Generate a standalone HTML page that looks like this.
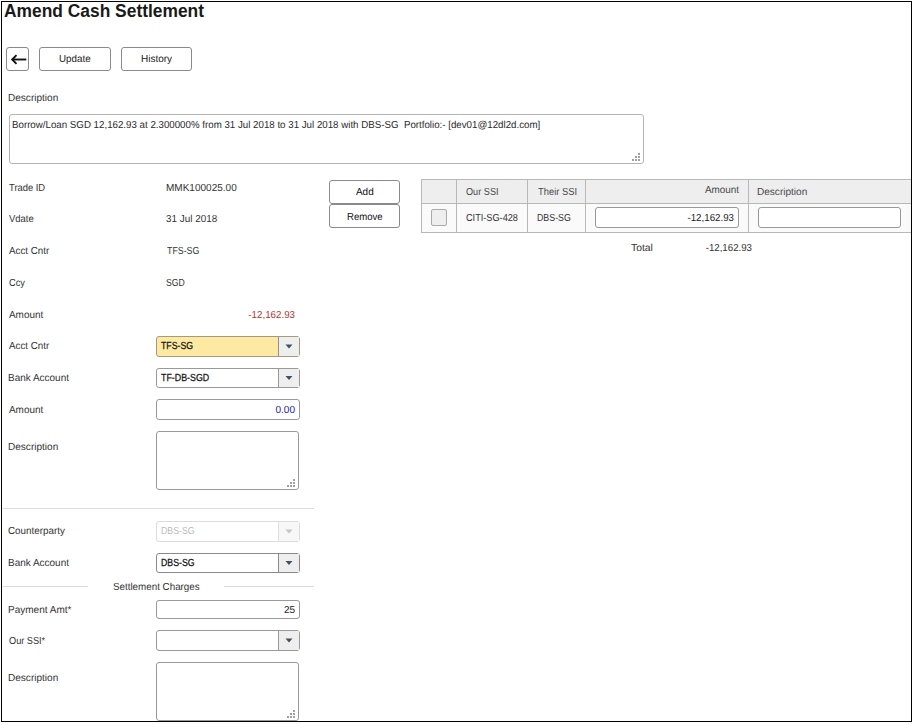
<!DOCTYPE html>
<html><head><meta charset="utf-8">
<style>
html,body{margin:0;padding:0;background:#fff;}
body{width:913px;height:724px;position:relative;overflow:hidden;font-family:"Liberation Sans",sans-serif;}
.frame{position:absolute;left:1px;top:1px;width:909px;height:719px;border:1px solid #000;}
.t{position:absolute;font-size:10.2px;line-height:10px;white-space:nowrap;color:#333;text-rendering:geometricPrecision;}
.btn{position:absolute;box-sizing:border-box;border:1px solid #8a8a8a;border-radius:3px;background:#fff;}
.box{position:absolute;box-sizing:border-box;border:1px solid #999;border-radius:3px;background:#fff;}
.dd .arr{position:absolute;right:0;top:0;bottom:0;width:20px;background:#eee;border-left:1px solid #999;}
.hl{position:absolute;height:1px;background:#dcdcdc;}
.grip{position:absolute;width:8px;height:8px;}
.grip i{position:absolute;width:2px;height:2px;background:#a0a0a0;}
.vl{position:absolute;width:1px;background:#b8b8b8;}
.hr{position:absolute;height:1px;background:#b8b8b8;}
</style></head><body>
<div class="frame"></div>
<div style="position:absolute;left:4px;top:1px;font-weight:bold;font-size:18px;line-height:20px;color:#1a1a1a;white-space:nowrap;transform:scaleX(0.966);transform-origin:0 0;">Amend Cash Settlement</div>

<div class="btn" style="left:6px;top:47px;width:23px;height:24px;">
  <svg width="23" height="24" style="position:absolute;left:-1px;top:-1px" viewBox="0 0 23 24">
    <path d="M6.5 12.5 H20.3" stroke="#111" stroke-width="1.9" fill="none"/>
    <path d="M10.5 8.2 L6.2 12.5 L10.5 16.8" stroke="#111" stroke-width="1.9" fill="none"/>
  </svg>
</div>
<div class="btn" style="left:39px;top:47px;width:72px;height:24px;"></div>
<div class="btn" style="left:121px;top:47px;width:71px;height:24px;"></div>
<div class="t" style="left:59.11px;top:55px;transform:scaleX(0.9615);transform-origin:0 0;color:#222;">Update</div>
<div class="t" style="left:140.90px;top:55px;transform:scaleX(0.9804);transform-origin:0 0;color:#222;">History</div>
<div class="t" style="left:8.10px;top:94px;transform:scaleX(0.9864);transform-origin:0 0;color:#333;">Description</div>
<div class="box" style="left:9px;top:114px;width:635px;height:50px;border-color:#b4b4b4;"></div>
<div class="t" style="left:11.72px;top:121px;transform:scaleX(0.9545);transform-origin:0 0;color:#2a2a2a;">Borrow/Loan SGD 12,162.93 at 2.300000% from 31 Jul 2018 to 31 Jul 2018 with DBS-SG&nbsp; Portfolio:- [dev01@12dl2d.com]</div>
<div class="grip" style="left:632px;top:153px;"><i style="left:6px;top:0px"></i><i style="left:3px;top:3px"></i><i style="left:6px;top:3px"></i><i style="left:0px;top:6px"></i><i style="left:3px;top:6px"></i><i style="left:6px;top:6px"></i></div>
<div class="t" style="left:8.91px;top:184px;transform:scaleX(0.9209);transform-origin:0 0;color:#333;">Trade ID</div>
<div class="t" style="left:9.20px;top:215px;transform:scaleX(0.9270);transform-origin:0 0;color:#333;">Vdate</div>
<div class="t" style="left:8.80px;top:247px;transform:scaleX(0.9589);transform-origin:0 0;color:#333;">Acct Cntr</div>
<div class="t" style="left:8.74px;top:279px;transform:scaleX(0.9099);transform-origin:0 0;color:#333;">Ccy</div>
<div class="t" style="left:8.80px;top:311px;transform:scaleX(0.9747);transform-origin:0 0;color:#333;">Amount</div>
<div class="t" style="left:8.80px;top:342px;transform:scaleX(0.9589);transform-origin:0 0;color:#333;">Acct Cntr</div>
<div class="t" style="left:8.00px;top:374px;transform:scaleX(0.9788);transform-origin:0 0;color:#333;">Bank Account</div>
<div class="t" style="left:8.80px;top:406px;transform:scaleX(0.9747);transform-origin:0 0;color:#333;">Amount</div>
<div class="t" style="left:8.10px;top:443px;transform:scaleX(0.9864);transform-origin:0 0;color:#333;">Description</div>
<div class="t" style="left:8.21px;top:527px;transform:scaleX(0.9650);transform-origin:0 0;color:#333;">Counterparty</div>
<div class="t" style="left:8.00px;top:559px;transform:scaleX(0.9788);transform-origin:0 0;color:#333;">Bank Account</div>
<div class="t" style="left:8.30px;top:605.5px;transform:scaleX(0.9820);transform-origin:0 0;color:#333;">Payment Amt*</div>
<div class="t" style="left:8.53px;top:637px;transform:scaleX(0.8997);transform-origin:0 0;color:#333;">Our SSI*</div>
<div class="t" style="left:8.10px;top:674px;transform:scaleX(0.9864);transform-origin:0 0;color:#333;">Description</div>
<div class="t" style="left:165.60px;top:184px;transform:scaleX(0.9832);transform-origin:0 0;color:#333;">MMK100025.00</div>
<div class="t" style="left:166.30px;top:215px;transform:scaleX(0.9708);transform-origin:0 0;color:#333;">31 Jul 2018</div>
<div class="t" style="left:166.62px;top:247px;transform:scaleX(0.8654);transform-origin:0 0;color:#333;">TFS-SG</div>
<div class="t" style="left:166.37px;top:279px;transform:scaleX(0.8525);transform-origin:0 0;color:#333;">SGD</div>
<div class="t" style="left:-4.80px;width:300px;text-align:right;top:311px;transform:scaleX(0.9574);transform-origin:100% 0;color:#b8332e;">-12,162.93</div>
<div class="box dd" style="left:156px;top:336px;width:144px;height:21px;background:#fde9a2;border-color:#a39a82;"><span class="arr" style="background:#eee;border-left-color:#8f8f8f;"><svg width="20" height="19" style="position:absolute;left:0;top:0"><polygon points="6.5,7.50 13.5,7.50 10,11.50" fill="#3e5262"/></svg></span></div>
<div class="t" style="left:161.13px;top:342px;transform:scaleX(0.8572);transform-origin:0 0;color:#111;-webkit-text-stroke:0.25px #111;">TFS-SG</div>
<div class="box dd" style="left:156px;top:368px;width:144px;height:20px;background:#fff;border-color:#999;"><span class="arr" style="background:#eee;border-left-color:#999;"><svg width="20" height="18" style="position:absolute;left:0;top:0"><polygon points="6.5,7.00 13.5,7.00 10,11.00" fill="#3e5262"/></svg></span></div>
<div class="t" style="left:161.12px;top:374px;transform:scaleX(0.8692);transform-origin:0 0;color:#111;-webkit-text-stroke:0.25px #111;">TF-DB-SGD</div>
<div class="box" style="left:156px;top:399px;width:144px;height:21px;"></div>
<div class="t" style="left:-4.84px;width:300px;text-align:right;top:406px;transform:scaleX(0.9856);transform-origin:100% 0;color:#23239c;">0.00</div>
<div class="box" style="left:156px;top:431px;width:143px;height:59px;border-color:#999;"></div>
<div class="grip" style="left:287px;top:479px;"><i style="left:6px;top:0px"></i><i style="left:3px;top:3px"></i><i style="left:6px;top:3px"></i><i style="left:0px;top:6px"></i><i style="left:3px;top:6px"></i><i style="left:6px;top:6px"></i></div>
<div class="hl" style="left:3px;top:508px;width:311px;"></div>
<div class="box dd" style="left:156px;top:521px;width:144px;height:21px;background:#fff;border-color:#dcdcdc;"><span class="arr" style="background:#f7f7f7;border-left-color:#e0e0e0;"><svg width="20" height="19" style="position:absolute;left:0;top:0"><polygon points="6.5,7.50 13.5,7.50 10,11.50" fill="#c4c4c4"/></svg></span></div>
<div class="t" style="left:160.70px;top:527px;transform:scaleX(0.8608);transform-origin:0 0;color:#bbbbbb;">DBS-SG</div>
<div class="box dd" style="left:156px;top:553px;width:144px;height:20px;background:#fff;border-color:#8a8a8a;"><span class="arr" style="background:#eee;border-left-color:#8a8a8a;"><svg width="20" height="18" style="position:absolute;left:0;top:0"><polygon points="6.5,7.00 13.5,7.00 10,11.00" fill="#3e5262"/></svg></span></div>
<div class="t" style="left:160.70px;top:559px;transform:scaleX(0.8608);transform-origin:0 0;color:#111;-webkit-text-stroke:0.25px #111;">DBS-SG</div>
<div class="hl" style="left:3px;top:586px;width:85px;"></div><div class="hl" style="left:224px;top:586px;width:90px;"></div>
<div class="t" style="left:112.51px;top:583px;transform:scaleX(0.9625);transform-origin:0 0;color:#333;">Settlement Charges</div>
<div class="box" style="left:156px;top:600px;width:144px;height:19px;"></div>
<div class="t" style="left:-4.68px;width:300px;text-align:right;top:606px;transform:scaleX(0.9804);transform-origin:100% 0;color:#222;">25</div>
<div class="box dd" style="left:156px;top:630px;width:144px;height:21px;background:#fff;border-color:#999;"><span class="arr" style="background:#eee;border-left-color:#999;"><svg width="20" height="19" style="position:absolute;left:0;top:0"><polygon points="6.5,7.50 13.5,7.50 10,11.50" fill="#3e5262"/></svg></span></div>
<div class="box" style="left:156px;top:662px;width:143px;height:59px;border-color:#999;"></div>
<div class="grip" style="left:287px;top:710px;"><i style="left:6px;top:0px"></i><i style="left:3px;top:3px"></i><i style="left:6px;top:3px"></i><i style="left:0px;top:6px"></i><i style="left:3px;top:6px"></i><i style="left:6px;top:6px"></i></div>
<div class="btn" style="left:329px;top:180px;width:71px;height:24px;"></div>
<div class="t" style="left:356.00px;top:188px;transform:scaleX(0.9747);transform-origin:0 0;color:#111;">Add</div>
<div class="btn" style="left:329px;top:204px;width:71px;height:24px;"></div>
<div class="t" style="left:346.63px;top:213px;transform:scaleX(0.9395);transform-origin:0 0;color:#111;">Remove</div>
<div style="position:absolute;left:421px;top:179px;width:490px;height:24px;background:#eeeeee;"></div>
<div style="position:absolute;left:421px;top:203px;width:490px;height:29px;background:#fafafa;"></div>
<div class="hr" style="left:421px;top:179px;width:490px;"></div>
<div class="hr" style="left:421px;top:203px;width:490px;"></div>
<div class="hr" style="left:421px;top:232px;width:490px;"></div>
<div class="vl" style="left:421px;top:179px;height:54px;"></div>
<div class="vl" style="left:456px;top:179px;height:54px;"></div>
<div class="vl" style="left:527px;top:179px;height:54px;"></div>
<div class="vl" style="left:585px;top:179px;height:54px;"></div>
<div class="vl" style="left:748px;top:179px;height:54px;"></div>
<div class="t" style="left:466.33px;top:188px;transform:scaleX(0.8975);transform-origin:0 0;color:#484848;">Our SSI</div>
<div class="t" style="left:537.81px;top:188px;transform:scaleX(0.9200);transform-origin:0 0;color:#484848;">Their SSI</div>
<div class="t" style="left:438.66px;width:300px;text-align:right;top:186px;transform:scaleX(0.9718);transform-origin:100% 0;color:#484848;">Amount</div>
<div class="t" style="left:757.30px;top:188px;transform:scaleX(0.9864);transform-origin:0 0;color:#484848;">Description</div>
<div style="position:absolute;left:431px;top:209px;width:16px;height:17px;box-sizing:border-box;border:1px solid #aaa;border-radius:2px;background:#eee;"></div>
<div class="t" style="left:466.24px;top:214px;transform:scaleX(0.8996);transform-origin:0 0;color:#333;">CITI-SG-428</div>
<div class="t" style="left:537.29px;top:214px;transform:scaleX(0.8661);transform-origin:0 0;color:#333;">DBS-SG</div>
<div class="box" style="left:595px;top:207px;width:144px;height:21px;"></div>
<div class="t" style="left:434.20px;width:300px;text-align:right;top:214px;transform:scaleX(0.9554);transform-origin:100% 0;color:#222;">-12,162.93</div>
<div class="box" style="left:758px;top:207px;width:143px;height:21px;"></div>
<div class="t" style="left:630.79px;top:244px;transform:scaleX(1.0142);transform-origin:0 0;color:#333;">Total</div>
<div class="t" style="left:451.50px;width:300px;text-align:right;top:244px;transform:scaleX(0.9512);transform-origin:100% 0;color:#333;">-12,162.93</div>
</body></html>
